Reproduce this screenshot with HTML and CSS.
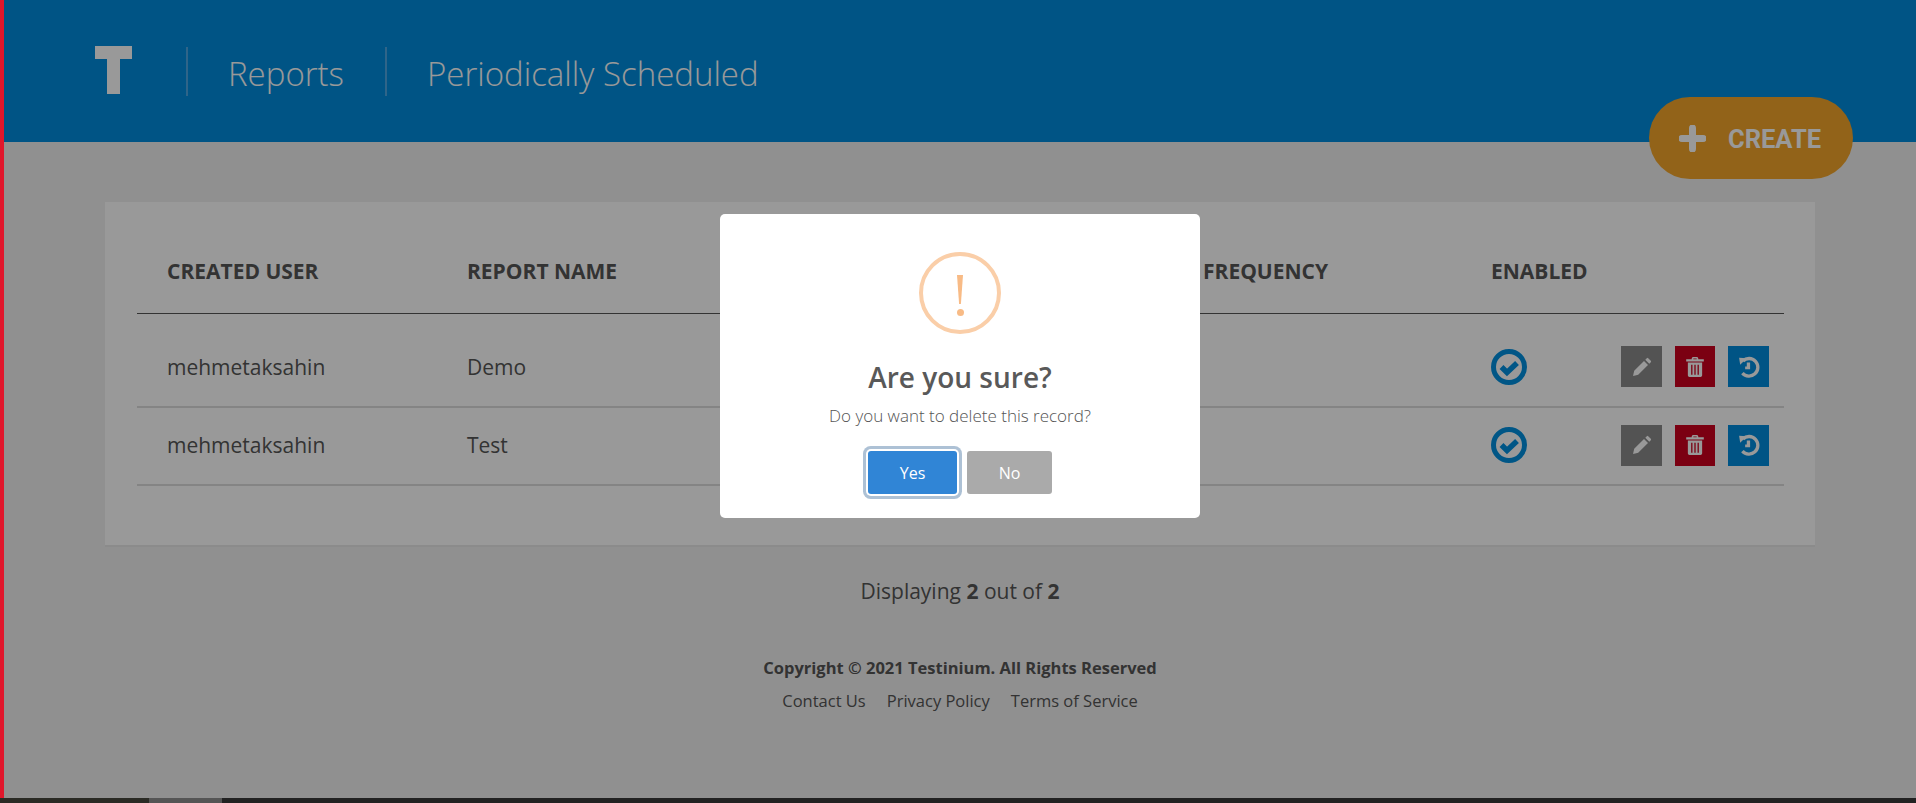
FILE: index.html
```html
<!DOCTYPE html>
<html lang="en">
<head>
    <meta charset="UTF-8">
    <title>Reports - Periodically Scheduled</title>
    <link rel="stylesheet" href="styles.css">
</head>
<body>
    <div class="page">
        <header class="topbar">
            <svg class="logo" viewBox="0 0 37 48" width="37" height="48">
                <rect x="0" y="0" width="37" height="13" fill="#fff"/>
                <rect x="12" y="0" width="13" height="48" fill="#fff"/>
            </svg>
            <span class="crumb">Reports</span>
            <span class="crumb">Periodically Scheduled</span>
        </header>

        <a class="create-btn" href="#">
            <svg viewBox="0 0 27 27" width="27" height="27">
                <path d="M13.500 3v21M3 13.500h21" stroke="#fff" stroke-width="7" stroke-linecap="round" fill="none"/>
            </svg>
            <span class="create-label">CREATE</span>
        </a>

        <main class="content">
            <section class="card">
                <table class="report-table">
                    <colgroup>
                        <col class="col-user">
                        <col class="col-name">
                        <col class="col-next">
                        <col class="col-freq">
                        <col class="col-enabled">
                        <col class="col-actions">
                    </colgroup>
                    <thead>
                        <tr>
                            <th>CREATED USER</th>
                            <th>REPORT NAME</th>
                            <th></th>
                            <th>FREQUENCY</th>
                            <th>ENABLED</th>
                            <th></th>
                        </tr>
                    </thead>
                    <tbody>
                        <tr class="first-row">
                            <td>mehmetaksahin</td>
                            <td>Demo</td>
                            <td></td>
                            <td></td>
                            <td>
                                <svg class="check" viewBox="0 0 36 36" width="36" height="36">
                                    <circle cx="18" cy="18" r="15.500" fill="none" stroke="#0090e0" stroke-width="5"/>
                                    <path d="M10.500 18l5.500 5.500 10-9.500" fill="none" stroke="#0090e0" stroke-width="5.500"/>
                                </svg>
                            </td>
                            <td>
                                <div class="actions">
                                    <button class="act act-edit">
                                        <svg viewBox="0 0 20 20" width="20" height="20"><path d="M1 19l1.200-5.200L12 4l4 4-9.800 9.800zM13.300 2.700l1.500-1.500a1 1 0 0 1 1.400 0l2.600 2.600a1 1 0 0 1 0 1.400l-1.500 1.500z" fill="#fff"/></svg>
                                    </button>
                                    <button class="act act-delete">
                                        <svg viewBox="0 0 20 20" width="22" height="22"><path fill-rule="evenodd" d="M7 2.500C7 1.500 7.800 1 8.500 1h3c.7 0 1.500.5 1.500 1.500V3h5v2H2V3h5zM8.500 2.300V3h3v-.7zM3.500 6h13v11.500c0 1-.8 1.500-1.500 1.500H5c-.7 0-1.500-.5-1.500-1.500zM6.500 8v9h1.200V8zM9.400 8v9h1.200V8zM12.300 8v9h1.200V8z" fill="#fff"/></svg>
                                    </button>
                                    <button class="act act-history">
                                        <svg viewBox="0 0 20 20" width="22" height="22"><path d="M4.500 4.500A8 8 0 1 1 4 15.500" fill="none" stroke="#fff" stroke-width="3"/><path d="M1 1.500l7 .5-6 6zM8 6h3v6H6.500V9.500H8z" fill="#fff"/></svg>
                                    </button>
                                </div>
                            </td>
                        </tr>
                        <tr>
                            <td>mehmetaksahin</td>
                            <td>Test</td>
                            <td></td>
                            <td></td>
                            <td>
                                <svg class="check" viewBox="0 0 36 36" width="36" height="36">
                                    <circle cx="18" cy="18" r="15.500" fill="none" stroke="#0090e0" stroke-width="5"/>
                                    <path d="M10.500 18l5.500 5.500 10-9.500" fill="none" stroke="#0090e0" stroke-width="5.500"/>
                                </svg>
                            </td>
                            <td>
                                <div class="actions">
                                    <button class="act act-edit">
                                        <svg viewBox="0 0 20 20" width="20" height="20"><path d="M1 19l1.200-5.200L12 4l4 4-9.800 9.800zM13.300 2.700l1.500-1.500a1 1 0 0 1 1.400 0l2.600 2.600a1 1 0 0 1 0 1.400l-1.500 1.500z" fill="#fff"/></svg>
                                    </button>
                                    <button class="act act-delete">
                                        <svg viewBox="0 0 20 20" width="22" height="22"><path fill-rule="evenodd" d="M7 2.500C7 1.500 7.800 1 8.500 1h3c.7 0 1.500.5 1.500 1.500V3h5v2H2V3h5zM8.500 2.300V3h3v-.7zM3.500 6h13v11.500c0 1-.8 1.500-1.500 1.500H5c-.7 0-1.500-.5-1.500-1.500zM6.500 8v9h1.200V8zM9.400 8v9h1.200V8zM12.300 8v9h1.200V8z" fill="#fff"/></svg>
                                    </button>
                                    <button class="act act-history">
                                        <svg viewBox="0 0 20 20" width="22" height="22"><path d="M4.500 4.500A8 8 0 1 1 4 15.500" fill="none" stroke="#fff" stroke-width="3"/><path d="M1 1.500l7 .5-6 6zM8 6h3v6H6.500V9.500H8z" fill="#fff"/></svg>
                                    </button>
                                </div>
                            </td>
                        </tr>
                    </tbody>
                </table>
            </section>

            <p class="count">Displaying <b>2</b> out of <b>2</b></p>

            <footer class="footer">
                <p class="copyright">Copyright © 2021 Testinium. All Rights Reserved</p>
                <nav class="footer-links">
                    <a href="#">Contact Us</a>
                    <a href="#">Privacy Policy</a>
                    <a href="#">Terms of Service</a>
                </nav>
            </footer>
        </main>
    </div>

    <!-- modal -->
    <div class="overlay">
        <div class="modal">
            <div class="warn-icon"><span class="warn-bar"></span><span class="warn-dot"></span></div>
            <h2 class="modal-title">Are you sure?</h2>
            <p class="modal-text">Do you want to delete this record?</p>
            <div class="modal-buttons">
                <button class="btn btn-yes">Yes</button>
                <button class="btn btn-no">No</button>
            </div>
        </div>
    </div>

    <div class="side-mark"></div>
    <div class="bottom-strip">
        <span class="strip-a"></span>
        <span class="strip-b"></span>
        <span class="strip-c"></span>
    </div>
</body>
</html>
```

FILE: styles.css
```css
html, body {
    margin: 0;
    height: 100%;
    overflow: hidden;
}
body {
    font-family: 'Open Sans', 'Liberation Sans', sans-serif;
    background-color: #f0f0f0;
    color: #555;
}
p, h2 {
    margin: 0;
}
a {
    color: inherit;
    text-decoration: none;
}
.page {
    margin-left: 4px;
    position: relative;
}

/* header */
.topbar {
    height: 142px;
    background-color: #008dde;
    display: flex;
    align-items: center;
    padding-left: 91px;
    box-sizing: border-box;
    color: #fff;
}
.logo {
    margin-top: -2px;
    margin-right: 54px;
}
.crumb {
    border-left: 2px solid #4fa9e4;
    height: 49px;
    line-height: 53px;
    padding: 0 41px 0 40px;
    font-size: 33px;
    font-weight: 300;
}
.create-btn {
    position: absolute;
    top: 97px;
    right: 63px;
    width: 204px;
    height: 82px;
    border-radius: 41px;
    background-color: #f3a52b;
    color: #fff;
    display: flex;
    align-items: center;
    gap: 22px;
    padding-left: 30px;
    box-sizing: border-box;
    font-family: 'Roboto', sans-serif;
    font-size: 25.500px;
    font-weight: 700;
}
.create-label {
    margin-top: 1px;
}

/* table card */
.content {
    padding: 60px 101px 0;
}
.card {
    background-color: #fff;
    padding: 0 32px;
    height: 345px;
    box-sizing: border-box;
    border-bottom: 2px solid #e8e8e8;
}
.report-table {
    width: 1647px;
    table-layout: fixed;
    border-collapse: collapse;
}
.col-user, .col-name { width: 300px; }
.col-next { width: 436px; }
.col-freq { width: 288px; }
.col-enabled { width: 140px; }
.col-actions { width: 183px; }
.report-table th {
    height: 111px;
    padding: 28px 0 0 30px;
    text-align: left;
    font-size: 21px;
    font-weight: 700;
    border-bottom: 1px solid #555;
    box-sizing: border-box;
}
.report-table td {
    height: 78px;
    padding: 0 0 2px 30px;
    font-size: 21px;
    border-bottom: 2px solid #ddd;
    box-sizing: border-box;
}
.report-table .first-row td {
    height: 94px;
    padding-top: 16px;
}
.report-table td:last-child {
    padding-left: 0;
}
.check {
    display: block;
}
.actions {
    display: flex;
    justify-content: flex-end;
    gap: 13px;
    padding-right: 15px;
}
.act {
    width: 41px;
    height: 41px;
    border: none;
    padding: 0;
    display: flex;
    align-items: center;
    justify-content: center;
}
.act-edit { background-color: #8a8a8a; }
.act-delete { background-color: #cd001e; width: 40px; }
.act-history { background-color: #008dde; }

.count {
    text-align: center;
    font-size: 21px;
    margin-top: 30px;
}
.footer {
    text-align: center;
    margin-top: 51px;
    font-size: 16.500px;
}
.copyright {
    font-weight: 700;
}
.footer-links {
    display: flex;
    justify-content: center;
    gap: 21px;
    margin-top: 10px;
}

/* modal */
.overlay {
    position: fixed;
    top: 0;
    right: 0;
    bottom: 5px;
    left: 4px;
    background-color: rgba(0,0,0,0.4);
    display: flex;
    justify-content: center;
    align-items: flex-start;
    padding-top: 214px;
    box-sizing: border-box;
}
.modal {
    width: 480px;
    height: 304px;
    background-color: #fff;
    border-radius: 5px;
    display: flex;
    flex-direction: column;
    align-items: center;
    padding-top: 38px;
    box-sizing: border-box;
}
.warn-icon {
    width: 82px;
    height: 82px;
    border: 4px solid #facea8;
    border-radius: 50%;
    box-sizing: border-box;
    position: relative;
}
.warn-bar {
    position: absolute;
    top: 19px;
    left: 34px;
    width: 6px;
    height: 29px;
    background-color: #f8bb86;
    clip-path: polygon(0 0, 100% 0, 65% 100%, 35% 100%);
}
.warn-dot {
    position: absolute;
    top: 53px;
    left: 33.500px;
    width: 7px;
    height: 7px;
    border-radius: 50%;
    background-color: #f8bb86;
}
.modal-title {
    font-size: 28px;
    font-weight: 600;
    line-height: 37px;
    margin-top: 25px;
    color: #595959;
}
.modal-text {
    font-size: 17px;
    font-weight: 300;
    line-height: 22px;
    margin-top: 9px;
    color: #545454;
}
.modal-buttons {
    display: flex;
    gap: 10px;
    margin-top: 24px;
}
.btn {
    height: 43px;
    border: none;
    border-radius: 3px;
    color: #fff;
    font-family: inherit;
    font-size: 16px;
}
.btn-yes {
    width: 89px;
    background-color: #3085d6;
    box-shadow: 0 0 0 2px #fff, 0 0 0 5px rgba(50,100,150,0.4);
}
.btn-no {
    width: 85px;
    background-color: #aaa;
}

/* marks that sit over the dimmed page */
.side-mark {
    position: fixed;
    top: 0;
    bottom: 5px;
    left: 0;
    width: 4px;
    background-color: #e0162b;
}
.bottom-strip {
    position: fixed;
    left: 0;
    right: 0;
    bottom: 0;
    height: 5px;
    display: flex;
}
.strip-a {
    width: 149px;
    background-color: #2b2b25;
}
.strip-b {
    width: 73px;
    background-color: #555;
}
.strip-c {
    flex: 1;
    background-color: #222;
}
```
